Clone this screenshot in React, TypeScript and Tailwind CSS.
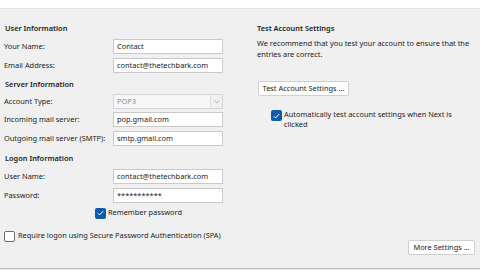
import React from "react";

const font = { fontFamily: '"Noto Sans", "Open Sans", sans-serif' };

function Field({ label, value }: { label: string; value: string }) {
  return (
    <div className="flex items-center h-[15px]">
      <div className="w-[113px] shrink-0 pl-[4px] whitespace-nowrap">{label}</div>
      <div className="w-[110px] h-[15px] bg-white border border-[#c9c9c9] flex items-center px-[3px] whitespace-nowrap overflow-hidden">
        {value}
      </div>
    </div>
  );
}

function Check({ checked }: { checked: boolean }) {
  return checked ? (
    <div className="w-[11px] h-[11px] rounded-[2px] bg-[#0a5cb0] flex items-center justify-center shrink-0">
      <svg width="7" height="6" viewBox="0 0 7 6">
        <path d="M0.8 3.2 L2.6 5 L6.2 1" stroke="white" strokeWidth="1" fill="none" />
      </svg>
    </div>
  ) : (
    <div className="w-[11px] h-[11px] rounded-[2px] bg-white border border-[#6e6e6e] shrink-0" />
  );
}

export default function App() {
  return (
    <div
      className="w-[480px] h-[270px] bg-[#f0f0f0] flex flex-col text-[7.4px] text-[#1c1c1c] overflow-hidden"
      style={font}
    >
      <div className="h-[8px] bg-white shrink-0" />
      <div className="h-[1px] bg-[#e3e3e3] shrink-0" />
      <div className="flex flex-1">
        {/* Left column */}
        <div className="w-[252px] shrink-0 flex flex-col">
          <div className="mt-[13px] h-[12px] leading-[12px] pl-[5px] font-semibold">User Information</div>
          <div className="mt-[5px]"><Field label="Your Name:" value="Contact" /></div>
          <div className="mt-[4px]"><Field label="Email Address:" value="contact@thetechbark.com" /></div>
          <div className="mt-[5px] h-[12px] leading-[12px] pl-[5px] font-semibold">Server Information</div>
          <div className="mt-[4px] flex items-center h-[15px]">
            <div className="w-[113px] shrink-0 pl-[4px] whitespace-nowrap">Account Type:</div>
            <div className="w-[110px] h-[15px] bg-[#f7f7f7] border border-[#d4d4d4] flex items-center justify-between pl-[3px] text-[#8f8f8f]">
              <span>POP3</span>
              <div className="w-[12px] h-[13px] bg-[#f0f0f0] border-l border-[#e0e0e0] flex items-center justify-center">
                <svg width="6" height="4" viewBox="0 0 6 4">
                  <path d="M0.5 0.5 L3 3 L5.5 0.5" stroke="#a8a8a8" strokeWidth="0.8" fill="none" />
                </svg>
              </div>
            </div>
          </div>
          <div className="mt-[3px]"><Field label="Incoming mail server:" value="pop.gmail.com" /></div>
          <div className="mt-[4px]"><Field label="Outgoing mail server (SMTP):" value="smtp.gmail.com" /></div>
          <div className="mt-[6px] h-[12px] leading-[12px] pl-[5px] font-semibold">Logon Information</div>
          <div className="mt-[5px]"><Field label="User Name:" value="contact@thetechbark.com" /></div>
          <div className="mt-[4px]"><Field label="Password:" value="***********" /></div>
          <div className="mt-[4px] h-[12px] flex items-center gap-[2px] pl-[95px]">
            <Check checked />
            <span className="whitespace-nowrap">Remember password</span>
          </div>
          <div className="mt-[11px] h-[12px] flex items-center gap-[3px] pl-[4px]">
            <Check checked={false} />
            <span className="whitespace-nowrap">Require logon using Secure Password Authentication (SPA)</span>
          </div>
        </div>
        {/* Right column */}
        <div className="flex-1 flex flex-col pl-[5px] pr-[5px]">
          <div className="mt-[13px] h-[12px] leading-[12px] font-semibold">Test Account Settings</div>
          <div className="mt-[4px] leading-[11px] whitespace-nowrap">
            We recommend that you test your account to ensure that the
            <br />
            entries are correct.
          </div>
          <div className="mt-[21px] pl-[1px]">
            <div className="w-[91px] h-[15px] bg-white border border-[#d0d0d0] rounded-[2px] flex items-center justify-center whitespace-nowrap">
              Test Account Settings ...
            </div>
          </div>
          <div className="mt-[13px] flex items-start gap-[2px] pl-[14px]">
            <div className="mt-[1px]"><Check checked /></div>
            <div className="leading-[10px] whitespace-nowrap">
              Automatically test account settings when Next is
              <br />
              clicked
            </div>
          </div>
          <div className="flex-1" />
          <div className="flex justify-end mb-[13px]">
            <div className="w-[67px] h-[15px] bg-white border border-[#d0d0d0] rounded-[2px] flex items-center justify-center whitespace-nowrap">
              More Settings ...
            </div>
          </div>
        </div>
      </div>
      <div className="h-[1px] bg-[#bdbdbd] shrink-0" />
      <div className="h-[1px] bg-[#e8e8e8] shrink-0" />
    </div>
  );
}
